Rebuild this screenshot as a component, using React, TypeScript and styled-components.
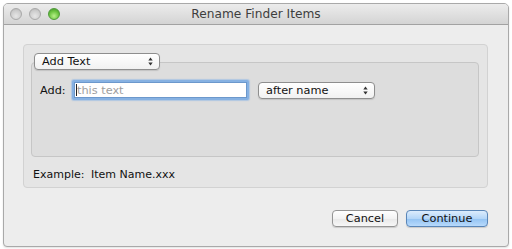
import React from "react";
import styled, { createGlobalStyle } from "styled-components";

const FONT = `"DejaVu Sans", "Lucida Grande", Verdana, sans-serif`;

const GlobalStyle = createGlobalStyle`
  html, body {
    margin: 0;
    padding: 0;
    background: #ffffff;
    font-family: ${FONT};
  }
`;

const Page = styled.div`
  width: 512px;
  height: 249px;
  padding: 3px 0 0 3px;
  box-sizing: border-box;
`;

const Window = styled.div`
  width: 506px;
  height: 244px;
  box-sizing: border-box;
  border: 1px solid #a9a9a9;
  border-radius: 5px 5px 4px 4px;
  background: #ededed;
  display: flex;
  flex-direction: column;
  overflow: hidden;
  box-shadow: 0 1px 2px rgba(0, 0, 0, 0.12);
`;

const TitleBar = styled.div`
  height: 21px;
  flex: 0 0 21px;
  box-sizing: border-box;
  background: linear-gradient(#ececec, #d4d4d4);
  border-bottom: 1px solid #a2a2a2;
  display: flex;
  align-items: center;
  position: relative;
`;

const Lights = styled.div`
  display: flex;
  gap: 7px;
  padding-left: 6px;
`;

const Light = styled.span<{ $active?: boolean }>`
  width: 12px;
  height: 12px;
  border-radius: 50%;
  box-sizing: border-box;
  border: 1px solid ${(p) => (p.$active ? "#4f9a3a" : "#a9a9a9")};
  background: ${(p) =>
    p.$active
      ? "radial-gradient(circle at 50% 70%, #b8f08a 0%, #6cc43f 55%, #3f8f2a 100%)"
      : "radial-gradient(circle at 50% 70%, #e6e6e6 0%, #cdcdcd 60%, #b2b2b2 100%)"};
`;

const Title = styled.div`
  position: absolute;
  left: 0;
  right: 0;
  text-align: center;
  font-size: 12.2px;
  color: #3e3e3e;
  pointer-events: none;
`;

const Body = styled.div`
  flex: 1;
  display: flex;
  flex-direction: column;
  padding: 19px 20px 0 19px;
`;

const Group = styled.div`
  box-sizing: border-box;
  height: 144px;
  border: 1px solid #d2d2d2;
  border-radius: 4px;
  background: #e5e5e5;
  padding: 8px 8px 0 7px;
  display: flex;
  flex-direction: column;
`;

const Popup = styled.div<{ $width: number }>`
  position: relative;
  z-index: 1;
  width: ${(p) => p.$width}px;
  height: 17px;
  box-sizing: border-box;
  border: 1px solid #8e8e8e;
  border-radius: 4px;
  background: linear-gradient(#ffffff, #f1f1f1);
  box-shadow: 0 1px 1px rgba(0, 0, 0, 0.12);
  display: flex;
  align-items: center;
  justify-content: space-between;
  padding: 0 6px 0 7px;
  font-size: 11.3px;
  color: #111;
`;

const Arrows = styled.svg`
  width: 5px;
  height: 9px;
`;

const GroupPopup = styled(Popup)`
  margin-left: 3px;
  margin-bottom: -8px;
`;

const Inner = styled.div`
  box-sizing: border-box;
  height: 95px;
  border: 1px solid #c6c6c6;
  border-radius: 4px;
  background: #dddddd;
  padding: 17px 0 0 8px;
  display: flex;
  align-items: flex-start;
`;

const Row = styled.div`
  display: flex;
  align-items: center;
`;

const Label = styled.span`
  font-size: 11.3px;
  color: #111;
  width: 32px;
`;

const Field = styled.div`
  width: 177px;
  height: 20px;
  box-sizing: border-box;
  border: 2px solid #86b1e2;
  border-radius: 2px;
  background: #ffffff;
  box-shadow: 0 0 1px 1px rgba(120, 170, 230, 0.45), inset 0 0 0 1px #6c98cc;
  display: flex;
  align-items: center;
  padding-left: 2px;
  margin-right: 9px;
  font-size: 11.3px;
  color: #9e9e9e;
`;

const Caret = styled.span`
  width: 1px;
  height: 12px;
  background: #222;
`;

const Example = styled.div`
  display: flex;
  font-size: 11px;
  color: #111;
  margin-top: 11px;
  padding-left: 2px;
  line-height: 14px;
`;

const ExampleLabel = styled.span`
  width: 58px;
`;

const Buttons = styled.div`
  display: flex;
  justify-content: flex-end;
  gap: 8px;
  margin-top: 22px;
`;

const Button = styled.div<{ $primary?: boolean; $width: number }>`
  width: ${(p) => p.$width}px;
  height: 17px;
  box-sizing: border-box;
  border-radius: 4px;
  border: 1px solid ${(p) => (p.$primary ? "#5a86b8" : "#959595")};
  background: ${(p) =>
    p.$primary
      ? "linear-gradient(#dcecfc, #b4d6f8 50%, #92c2f2 51%, #b8dafc)"
      : "linear-gradient(#ffffff, #f3f3f3 50%, #e8e8e8 51%, #f7f7f7)"};
  box-shadow: 0 1px 1px rgba(0, 0, 0, 0.15);
  display: flex;
  align-items: center;
  justify-content: center;
  font-size: 11.3px;
  color: #111;
`;

const UpDown = () => (
  <Arrows viewBox="0 0 5 9">
    <path d="M2.5 0.5 L4.7 3.5 L0.3 3.5 Z" fill="#333" />
    <path d="M2.5 8.5 L4.7 5.5 L0.3 5.5 Z" fill="#333" />
  </Arrows>
);

export default function App() {
  return (
    <Page>
      <GlobalStyle />
      <Window>
        <TitleBar>
          <Lights>
            <Light />
            <Light />
            <Light $active />
          </Lights>
          <Title>Rename Finder Items</Title>
        </TitleBar>
        <Body>
          <Group>
            <GroupPopup $width={126}>
              <span>Add Text</span>
              <UpDown />
            </GroupPopup>
            <Inner>
              <Row>
                <Label>Add:</Label>
                <Field>
                  <Caret />
                  <span>this text</span>
                </Field>
                <Popup $width={117}>
                  <span>after name</span>
                  <UpDown />
                </Popup>
              </Row>
            </Inner>
            <Example>
              <ExampleLabel>Example:</ExampleLabel>
              <span>Item Name.xxx</span>
            </Example>
          </Group>
          <Buttons>
            <Button $width={66}>Cancel</Button>
            <Button $primary $width={82}>
              Continue
            </Button>
          </Buttons>
        </Body>
      </Window>
    </Page>
  );
}
